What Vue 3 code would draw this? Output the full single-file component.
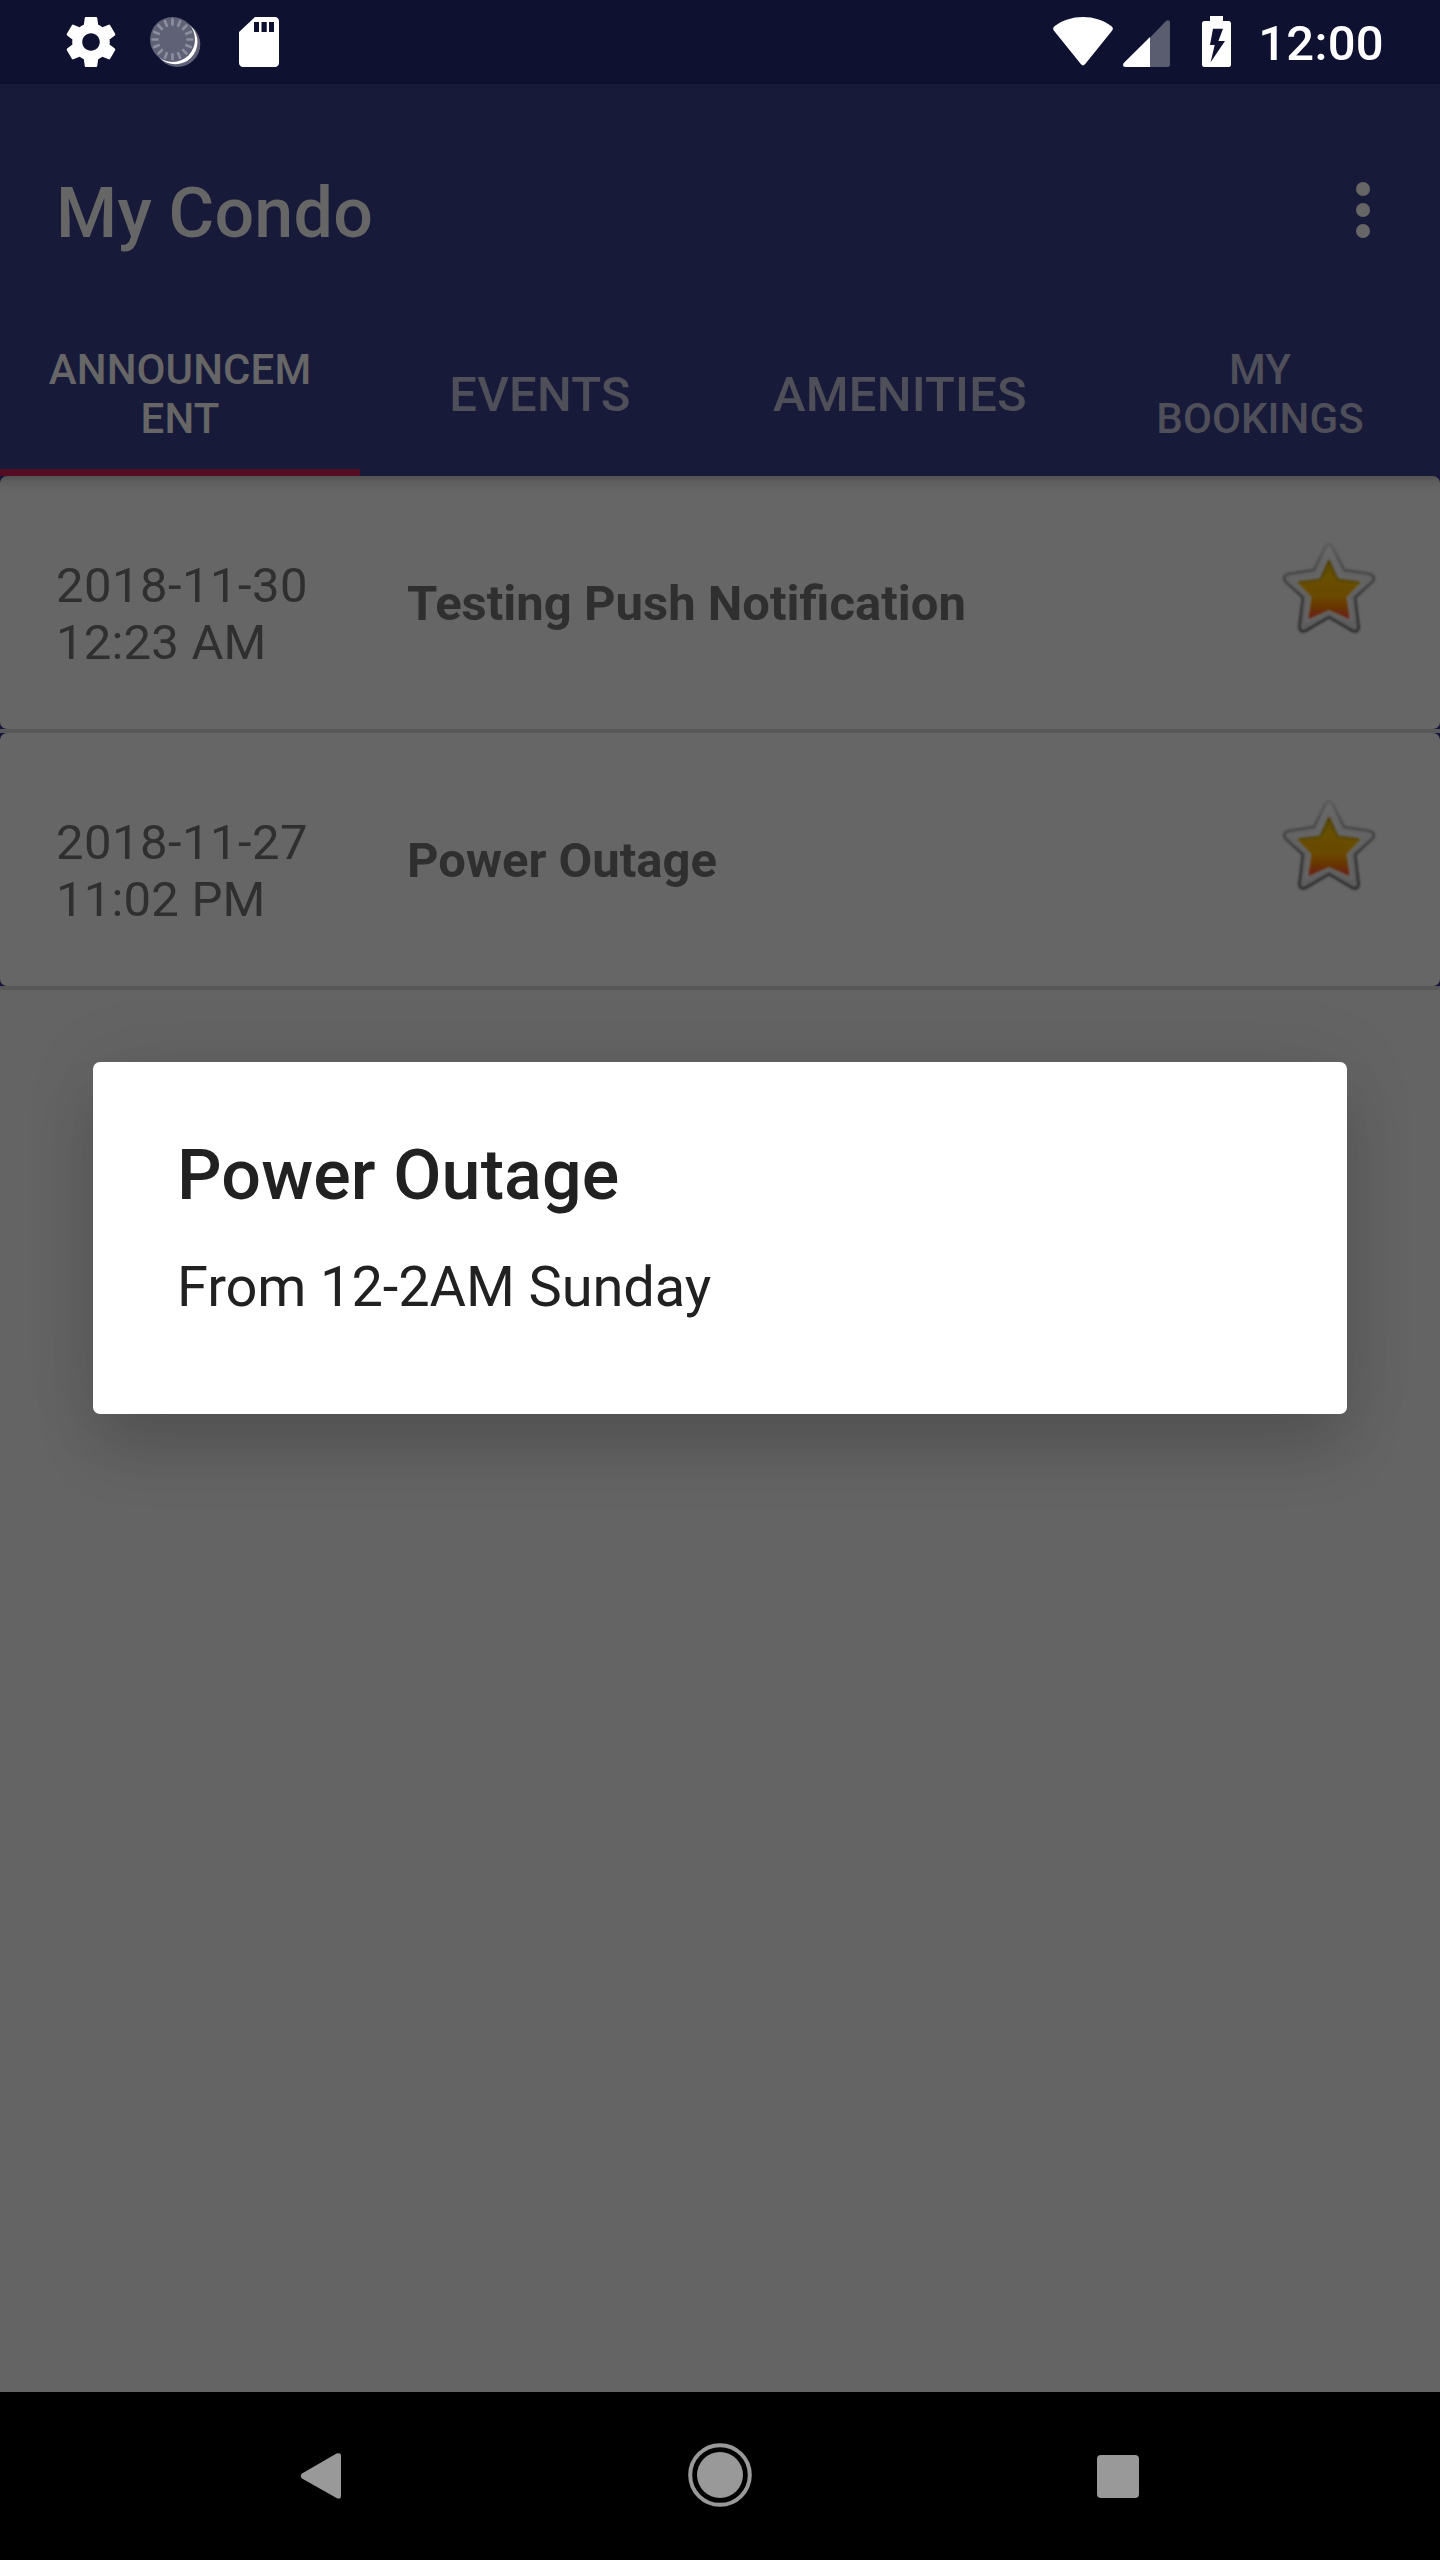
<script setup>
const tabs = [
  { lines: ['ANNOUNCEM', 'ENT'], active: true },
  { lines: ['EVENTS'] },
  { lines: ['AMENITIES'] },
  { lines: ['MY', 'BOOKINGS'] },
]
const items = [
  { date: '2018-11-30', time: '12:23 AM', title: 'Testing Push Notification' },
  { date: '2018-11-27', time: '11:02 PM', title: 'Power Outage' },
]
const ticks = Array.from({ length: 16 }, (_, i) => i * 22.5)
</script>

<template>
  <div class="screen">
    <header class="status">
      <div class="status-left">
        <svg width="60" height="60" viewBox="0 0 24 24" fill="#fff">
          <path d="M19.43 12.98c.04-.32.07-.64.07-.98s-.03-.66-.07-.98l2.11-1.65c.19-.15.24-.42.12-.64l-2-3.46c-.12-.22-.39-.3-.61-.22l-2.49 1c-.52-.4-1.08-.73-1.69-.98l-.38-2.65C14.46 2.18 14.25 2 14 2h-4c-.25 0-.46.18-.49.42l-.38 2.65c-.61.25-1.17.59-1.69.98l-2.49-1c-.23-.09-.49 0-.61.22l-2 3.46c-.13.22-.07.49.12.64l2.11 1.65c-.04.32-.07.65-.07.98s.03.66.07.98l-2.11 1.65c-.19.15-.24.42-.12.64l2 3.46c.12.22.39.3.61.22l2.49-1c.52.4 1.08.73 1.69.98l.38 2.65c.03.24.24.42.49.42h4c.25 0 .46-.18.49-.42l.38-2.65c.61-.25 1.17-.59 1.69-.98l2.49 1c.23.09.49 0 .61-.22l2-3.46c.12-.22.07-.49-.12-.64l-2.11-1.65zM12 15.5c-1.93 0-3.5-1.57-3.5-3.5s1.57-3.5 3.5-3.5 3.5 1.57 3.5 3.5-1.57 3.5-3.5 3.5z" />
        </svg>
        <svg width="60" height="60" viewBox="0 0 60 60">
          <circle cx="32.5" cy="32.2" r="22.8" fill="#5f6177" />
          <circle cx="30.3" cy="30" r="22.2" fill="#fff" />
          <circle cx="27.5" cy="27.5" r="22.5" fill="#5f6177" />
          <g stroke="#8c8d9d" stroke-width="2.7" stroke-linecap="round">
            <line v-for="a in ticks" :key="a" x1="27.5" y1="7.7" x2="27.5" y2="12.6" :transform="`rotate(${a} 27.5 27.5)`" />
          </g>
        </svg>
        <svg width="60" height="60" viewBox="0 0 24 24" fill="#fff">
          <path d="M18.4 2h-8L4 8v12.4c0 .9.7 1.6 1.6 1.6h12.8c.9 0 1.6-.7 1.6-1.6V3.6c0-.9-.7-1.6-1.6-1.6zM12 8h-2V4h2v4zm3.1 0h-2.1V4h2.1v4zm2.9 0h-2V4h2v4z" />
        </svg>
      </div>
      <div class="status-right">
        <svg width="60" height="50" viewBox="0 0 60 50" fill="#fff">
          <path d="M1.2 14Q-1 11.300 1.500 9.300C9 3.400 19 0 30 0s21 3.400 28.500 9.300Q61 11.300 58.800 14L32 47.300Q30 49.500 28 47.300z" />
        </svg>
        <svg class="signal" width="48" height="48" viewBox="0 0 48 48">
          <path d="M27 17.500L42.800 1.300C44.600-.7 47 0 47 2.500V44.500Q47 47 44.500 47H27z" fill="#5a5c70" />
          <path d="M27 17V47H2.500C-.3 47-.6 44.500 1 42.800z" fill="#fff" />
        </svg>
        <svg class="battery" width="29" height="51" viewBox="0 0 29 51">
          <path d="M8 0h13v5h5.500Q29 5 29 7.500v41Q29 51 26.500 51h-24Q0 51 0 48.500v-41Q0 5 2.500 5H8z" fill="#fff" />
          <path d="M11 12.700h10l-4.600 12.300h6.600L8.600 46.300 12.700 29H8z" fill="#0e112f" />
        </svg>
        <span class="clock">12:00</span>
      </div>
    </header>

    <section class="appbar">
      <div class="toolbar">
        <h1>My Condo</h1>
        <div class="more"><i></i><i></i><i></i></div>
      </div>
      <nav class="tabs">
        <div v-for="t in tabs" :key="t.lines[0]" class="tab" :class="{ active: t.active, small: t.lines.length > 1 }">
          <span v-for="l in t.lines" :key="l">{{ l }}</span>
        </div>
      </nav>
    </section>

    <main>
      <div v-for="it in items" :key="it.title" class="row">
        <article class="card">
          <div class="date"><span class="day">{{ it.date }}</span><span class="time">{{ it.time }}</span></div>
          <div class="title">{{ it.title }}</div>
          <svg class="star" width="100" height="100" viewBox="0 0 100 100">
            <defs>
              <linearGradient id="fill" x1="0" y1="0" x2="0" y2="1">
                <stop offset="0" stop-color="#5f4a00" />
                <stop offset=".3" stop-color="#675000" />
                <stop offset=".6" stop-color="#6a4a00" />
                <stop offset=".8" stop-color="#683605" />
                <stop offset="1" stop-color="#6a1c0b" />
              </linearGradient>
              <linearGradient id="rim" x1="0" y1="0" x2="0" y2="1">
                <stop offset="0" stop-color="#5a5a5a" />
                <stop offset=".3" stop-color="#484848" />
                <stop offset=".6" stop-color="#363636" />
                <stop offset="1" stop-color="#2c2c2c" />
              </linearGradient>
              <linearGradient id="silver" x1="0" y1="0" x2="0" y2="1">
                <stop offset="0" stop-color="#696969" />
                <stop offset="1" stop-color="#5c5c5c" />
              </linearGradient>
              <filter id="soft" x="-10%" y="-10%" width="120%" height="120%"><feGaussianBlur stdDeviation=".8" /></filter>
            </defs>
            <path filter="url(#soft)" d="M46.500 8Q50 2.500 53.500 8L65 31 90 34.800Q97.500 37 93.500 42.500L76 58.500 79.500 87Q79.500 94.500 73 91.500L50 78 27 91.500Q20.500 94.500 20.500 87L24 58.500 6.500 42.500Q2.500 37 10 34.800L35 31z" fill="url(#silver)" stroke="url(#rim)" stroke-width="2.800" stroke-linejoin="round" />
            <path d="M50 15L61.500 36.500 86 40 70.500 58 74 84 50 73 26 84 29.500 58 14 40 38.500 36.500z" fill="#666" filter="url(#soft)" />
            <path filter="url(#soft)" d="M50 20.500L59 40 82 43 67.500 58 70.500 80 50 71 29.500 80 32.500 58 18 43 41 40z" fill="url(#fill)" />
            <path filter="url(#soft)" d="M20 43.200L41.500 40.300 50 22 58.500 40.300 80 43.200" fill="none" stroke="#3a3000" stroke-opacity=".65" stroke-width="1.300" />
          </svg>
        </article>
      </div>
    </main>

    <footer class="navbar">
      <svg width="42" height="48" viewBox="0 0 42 48" fill="#999">
        <path d="M2 21.500L36.500 1.600Q41 0 41 4V44Q41 48 36.500 46L2 26.500Q-.5 24 2 21.500z" />
      </svg>
      <svg class="home" width="64" height="64" viewBox="0 0 64 64">
        <circle cx="32" cy="32" r="29.800" fill="none" stroke="#999" stroke-width="4" />
        <circle cx="32" cy="32" r="23" fill="#999" />
      </svg>
      <div class="square"></div>
    </footer>

    <div class="dialog">
      <h2>Power Outage</h2>
      <p>From 12-2AM Sunday</p>
    </div>
  </div>
</template>

<style>
body { margin: 0; background: #646464; }
</style>

<style scoped>
.screen {
  position: relative;
  width: 1440px;
  height: 2560px;
  display: flex;
  flex-direction: column;
  overflow: hidden;
  background: #646464;
  font-family: Roboto, "Noto Sans", sans-serif;
}
svg { display: block; }
.status {
  height: 84px;
  flex: none;
  background: #0e112f;
  display: flex;
  justify-content: space-between;
}
.status-left {
  display: flex;
  align-items: center;
  gap: 24px;
  padding-left: 61px;
}
.status-right {
  display: flex;
  align-items: flex-start;
  padding: 17px 56px 0 0;
}
.signal { margin: 3px 0 0 10px; }
.battery { margin: -1px 0 0 31px; }
.clock {
  margin: -2px 0 0 27px;
  font-size: 49px;
  line-height: 58px;
  font-weight: 500;
  letter-spacing: .3px;
  color: #fff;
}
.appbar {
  height: 392px;
  flex: none;
  background: #181a3a;
  display: flex;
  flex-direction: column;
}
.toolbar {
  height: 196px;
  padding: 28px 70px 0 56px;
  display: flex;
  align-items: center;
  justify-content: space-between;
}
h1 {
  margin: 6px 0 0;
  font-size: 70px;
  line-height: 82px;
  font-weight: 500;
  letter-spacing: .25px;
  word-spacing: -1.2px;
  color: #666;
}
.more { display: flex; flex-direction: column; gap: 7px; }
.more i { width: 14px; height: 14px; border-radius: 50%; background: #666; }
.tabs { display: flex; height: 168px; }
.tab {
  box-sizing: border-box;
  width: 360px;
  padding-top: 6px;
  display: flex;
  flex-direction: column;
  align-items: center;
  justify-content: center;
  font-size: 49px;
  line-height: 58px;
  font-weight: 500;
  letter-spacing: .2px;
  color: #4f4f59;
}
.tab.small { padding-top: 4px; font-size: 42px; line-height: 49px; letter-spacing: .1px; }
.tab.active { color: #666; box-shadow: inset 0 -7px #540c25; }
main { flex: 1; }
.row {
  height: 253px;
  background: #15163a;
  border-bottom: 4px solid #585858;
}
.card {
  height: 253px;
  border-radius: 7px;
  background: #666;
  display: flex;
  align-items: center;
  color: #2f2f2f;
  font-size: 49px;
}
.row:first-child .card { background: linear-gradient(#525252, #5e5e5e 6px, #646464 12px, #666 18px); }
.date {
  width: 351px;
  padding: 23px 0 0 56px;
  box-sizing: border-box;
  margin-right: 56px;
  display: flex;
  flex-direction: column;
  line-height: 57px;
}
.day { letter-spacing: .45px; }
.time { letter-spacing: .2px; }
.title { flex: 1; padding-top: 2px; line-height: 58px; font-weight: 700; }
.star { margin: 0 61px 27px 0; }
.navbar {
  height: 168px;
  flex: none;
  background: #000;
  display: flex;
  align-items: center;
  justify-content: space-between;
  padding: 0 301px 0 300px;
  box-sizing: border-box;
}
.home { margin-bottom: 2px; }
.square { width: 42px; height: 43px; border-radius: 4px; background: #999; }
.dialog {
  position: absolute;
  left: 93px;
  top: 1062px;
  width: 1254px;
  height: 352px;
  box-sizing: border-box;
  padding: 72px 84px 0;
  border-radius: 7px;
  background: #fff;
  box-shadow: 0 40px 62px -4px rgba(0, 0, 0, .15), 0 0 80px rgba(0, 0, 0, .08);
  color: #212121;
}
h2 { margin: 0; font-size: 70px; line-height: 82px; font-weight: 500; letter-spacing: .12px; }
p { margin: 38px 0 0; font-size: 56px; line-height: 66px; letter-spacing: -.1px; }
</style>
